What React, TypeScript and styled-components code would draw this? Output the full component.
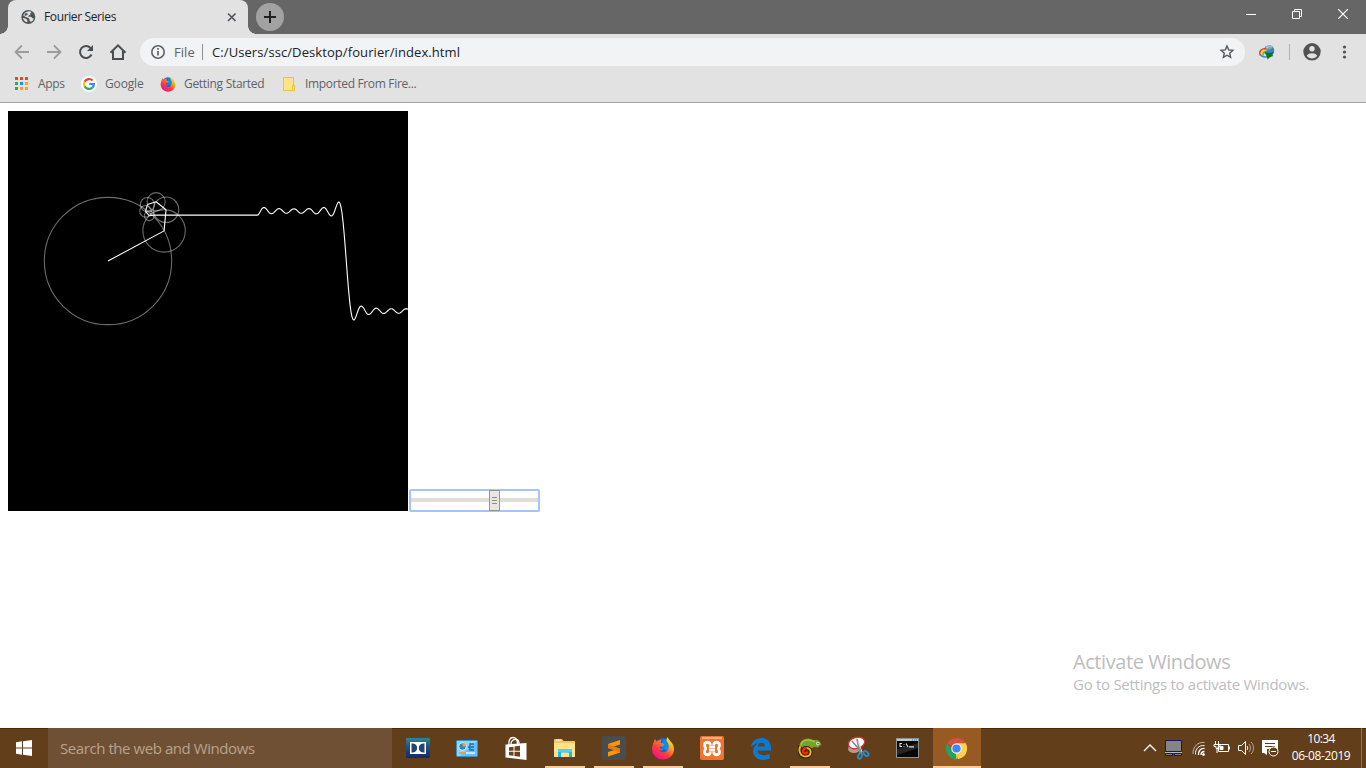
import React from 'react';
import styled, { createGlobalStyle } from 'styled-components';

const GlobalStyle = createGlobalStyle`
  * { box-sizing: border-box; }
  html, body { margin: 0; padding: 0; overflow: hidden; background: #fff; }
  body { font-family: "Open Sans", "Noto Sans", sans-serif; font-size: 12px; }
  svg { display: block; flex: none; }
`;

const Screen = styled.div`
  width: 1366px;
  height: 768px;
  display: flex;
  flex-direction: column;
`;

const Label = styled.span<{ $size?: number; $track?: number; $color?: string }>`
  font-size: ${p => p.$size ?? 12}px;
  letter-spacing: ${p => p.$track ?? 0}px;
  color: ${p => p.$color ?? '#5f6368'};
  line-height: 1;
  white-space: nowrap;
`;

/* Browser chrome */
const TabStrip = styled.header`
  height: 34px;
  display: flex;
  background: #666;
  flex: none;
`;

const Tab = styled.div`
  position: relative;
  width: 240px;
  height: 34px;
  margin-left: 8px;
  padding: 0 10px 0 13px;
  display: flex;
  align-items: center;
  background: #e2e2e2;
  border-radius: 8px 8px 0 0;
  &::before, &::after {
    content: '';
    position: absolute;
    bottom: 0;
    width: 8px;
    height: 8px;
  }
  &::before { left: -8px; background: radial-gradient(circle at 0 0, transparent 7.5px, #e2e2e2 8px); }
  &::after { right: -8px; background: radial-gradient(circle at 100% 0, transparent 7.5px, #e2e2e2 8px); }
`;

const TabTitle = styled.div`
  flex: 1;
  padding-left: 7px;
  display: flex;
`;

const NewTab = styled.button`
  width: 28px;
  height: 28px;
  margin: 3px 0 0 8px;
  padding: 0;
  border: 0;
  border-radius: 50%;
  background: #a2a2a2;
  display: grid;
  place-items: center;
`;

const WindowButtons = styled.div`
  margin-left: auto;
  display: flex;
`;

const WindowButton = styled.div`
  width: 46px;
  height: 28px;
  display: grid;
  place-items: center;
`;

const Toolbar = styled.div`
  height: 36px;
  padding-left: 12px;
  display: flex;
  align-items: center;
  background: #e2e2e2;
  flex: none;
`;

const NavButton = styled.div`
  width: 32px;
`;

const Omnibox = styled.div`
  width: 1105px;
  height: 28px;
  padding: 0 9px;
  display: flex;
  align-items: center;
  border-radius: 14px;
  background: #f1f3f4;
`;

const Scheme = styled.div`
  box-sizing: content-box;
  width: 28px;
  height: 16px;
  margin: 0 9px 0 7px;
  display: flex;
  align-items: center;
  border-right: 1px solid #8f9194;
`;

const Push = styled.div`
  margin-left: auto;
`;

const Actions = styled.div`
  flex: 1;
  display: flex;
  align-items: center;
  padding-left: 13px;
`;

const ActionDivider = styled.div`
  width: 1px;
  height: 16px;
  margin: 0 13px;
  background: #b0b0b0;
`;

const Bookmarks = styled.nav`
  height: 33px;
  padding: 0 0 4px 13px;
  display: flex;
  align-items: center;
  background: #e2e2e2;
  border-bottom: 1px solid #a0a0a0;
  flex: none;
`;

const Bookmark = styled.div<{ $width: number }>`
  width: ${p => p.$width}px;
  display: flex;
  align-items: center;
  gap: 8px;
`;

/* Page */
const Page = styled.main`
  height: 625px;
  flex: none;
  padding: 8px;
  display: flex;
  flex-direction: column;
  justify-content: space-between;
`;

const Sketch = styled.div`
  display: flex;
  align-items: flex-end;
  gap: 1px;
`;

const Slider = styled.div`
  width: 131px;
  height: 23px;
  margin-bottom: -1px;
  border: 2px solid #a3c4fc;
  border-radius: 2px;
  display: flex;
  align-items: center;
  background: linear-gradient(#e2ddd8, #e2ddd8) 0 7px / 100% 4px no-repeat;
`;

const Thumb = styled.div`
  width: 11px;
  height: 21px;
  margin: 0 0 0 78px;
  border: 1px solid #969490;
  background: #e9e6e2;
  display: flex;
  flex-direction: column;
  align-items: center;
  justify-content: center;
  gap: 2px;
`;

const Grip = styled.i`
  width: 5px;
  height: 1px;
  background: #8f8d89;
`;

const Watermark = styled.div`
  width: 285px;
  height: 68px;
  align-self: flex-end;
  display: flex;
  flex-direction: column;
  gap: 5px;
`;

/* Taskbar */
const Taskbar = styled.footer`
  height: 40px;
  flex: none;
  display: flex;
  background: #623e1a;
  box-shadow: inset 0 1px #4b2807;
`;

const Start = styled.div`
  width: 48px;
  display: grid;
  place-items: center;
`;

const SearchBox = styled.div`
  width: 344px;
  padding: 0 0 0 12px;
  margin-right: 2px;
  display: flex;
  align-items: center;
  background: #705035;
`;

const Apps = styled.div`
  display: flex;
  gap: 1px;
`;

const AppButton = styled.div<{ $open?: boolean; $active?: boolean; $nudge?: boolean }>`
  width: 48px;
  height: 40px;
  padding-right: ${p => (p.$nudge ? 1 : 0)}px;
  display: grid;
  place-items: center;
  background:
    ${p => p.$open || p.$active
      ? `linear-gradient(#fccb9c, #fccb9c) center bottom / ${p.$active ? 48 : 40}px 2px no-repeat`
      : 'none'},
    ${p => (p.$active ? '#975a22' : 'transparent')};
`;

const Tray = styled.div`
  margin-left: auto;
  display: flex;
  align-items: center;
`;

const Clock = styled.div`
  width: 80px;
  height: 38px;
  display: flex;
  flex-direction: column;
  align-items: center;
  justify-content: center;
  gap: 5px;
  padding-bottom: 2px;
`;

const ShowDesktop = styled.div`
  width: 5px;
  height: 40px;
  border-left: 1px solid #8d745b;
`;

const WAVE_LEFT = 250;
const CENTER = { x: 100, y: 150 };
const PHASE = -0.493;
const STEP = 0.03;
const TERMS = [1, 3, 5, 7, 9, 11, 13];

function FourierCanvas() {
  let { x, y } = CENTER;
  const arms = TERMS.map(n => {
    const r = 200 / (n * Math.PI);
    const from = { x, y };
    x += r * Math.cos(n * PHASE);
    y += r * Math.sin(n * PHASE);
    return { r, from, to: { x, y } };
  });
  const height = (t: number) =>
    CENTER.y + TERMS.reduce((sum, n) => sum + (200 / (n * Math.PI)) * Math.sin(n * t), 0);
  const wave = Array.from({ length: 152 }, (_, i) =>
    `${WAVE_LEFT + i},${height(PHASE - i * STEP).toFixed(2)}`).join(' ');
  return (
    <svg width="400" height="400" viewBox="0 0 400 400" fill="none" stroke="#fff" strokeWidth="1.1">
      <rect width="400" height="400" fill="#000" stroke="none" />
      {arms.map((a, i) => (
        <g key={i}>
          <circle cx={a.from.x} cy={a.from.y} r={a.r} strokeOpacity=".42" />
          <line x1={a.from.x} y1={a.from.y} x2={a.to.x} y2={a.to.y} />
        </g>
      ))}
      <line x1={x} y1={y} x2={WAVE_LEFT} y2={y} />
      <polyline points={wave} />
    </svg>
  );
}

const Globe = () => (
  <svg width="16" height="16" viewBox="0 0 16 16">
    <circle cx="7.3" cy="8" r="7" fill="#505356" />
    <path d="M7 2.600c1.300-.5 2.500-.2 3.500.4L9.300 4.300l.2 1.300-1.800.8-.4 1.400H10l1.500 1.500 1.300.1c-.4 1.300-1.300 2.600-2.600 3.300l-1.700-.8.2-1.500-1.500-1.700-2.400-.6-2.500-1.500C2.500 5 4.500 3 7 2.600z" fill="#e2e2e2" />
    <path d="M4 4.500l2.200-.5.6 1.600-2 1.200-1.500-.3z" fill="#505356" />
    <path d="M1.900 8.700l3 1 1.400 1.400v2.200C4 12.800 2.200 11 1.900 8.700z" fill="#e2e2e2" />
  </svg>
);

const Firefox = ({ size, id }: { size: number; id: string }) => (
  <svg width={size} height={size} viewBox="0 0 24 24">
    <defs>
      <linearGradient id={id} x1=".85" y1="0" x2=".2" y2=".9">
        <stop offset="0" stopColor="#fff33f" />
        <stop offset=".35" stopColor="#ffa51b" />
        <stop offset=".65" stopColor="#ff4236" />
        <stop offset="1" stopColor="#f2108c" />
      </linearGradient>
    </defs>
    <circle cx="12" cy="10.800" r="8.900" fill="#1265ce" />
    <path d="M12 3c5 0 8 3 8 7l-4 5-6-4z" fill="#0090f5" />
    <path d="M16.500 1c1 3 6 5.500 6.500 11.500.4 6.500-4.600 11-11 11S.7 18.500 1 12.500C1.100 8.500 3 5.500 4 3l1.500 2.800C7 4.900 8.500 4 10.300 3.500L9.500 6.700l4 1.500-1.400 1.700-2.800.7-.5 1.600 3.700.8c-1.500 1.900-2.800 1.500-4.500 1.200 1.700 2.500 5.500 2.800 7.800.7 3.200-3 1.800-7 .4-9.200C15 4.300 15.700 2.700 16.500 1z" fill={`url(#${id})`} />
    <path d="M4 3C3 6 3.500 9 5 10l5.200.2 3.300-2-3.600-1.300.4-3.400C8.500 4 7 4.900 5.500 5.800z" fill="#f25a45" opacity=".55" />
  </svg>
);

const Google = () => (
  <svg width="16" height="16" viewBox="0 0 16 16" fill="none" strokeWidth="2.200">
    <circle cx="8" cy="8" r="8" fill="#fff" />
    <path d="M11.600 4.500A5 5 0 0 0 3.600 5.700" stroke="#ea4335" />
    <path d="M3.600 5.700a5 5 0 0 0 0 4.600" stroke="#fbbc05" />
    <path d="M3.600 10.300a5 5 0 0 0 7.700 1.400" stroke="#34a853" />
    <path d="M8.200 8h4.700c0 1.700-.6 2.800-1.600 3.700" stroke="#4285f4" />
  </svg>
);

const AppsGrid = () => (
  <svg width="17" height="16" viewBox="0 0 17 16">
    {['#ea4335', '#ea4335', '#ea4335', '#34a853', '#2f86eb', '#f5a80a', '#34a853', '#f5a80a', '#f5a80a'].map((c, i) => (
      <rect key={i} x={2 + (i % 3) * 5} y={1 + Math.floor(i / 3) * 5} width="3" height="3" fill={c} />
    ))}
  </svg>
);

const Dolby = () => (
  <svg width="24" height="20" viewBox="0 0 24 20">
    <defs><linearGradient id="dolby" x2="0" y2="1"><stop stopColor="#2b8a98" /><stop offset=".4" stopColor="#225582" /><stop offset="1" stopColor="#1b2762" /></linearGradient></defs>
    <rect width="24" height="20" rx="1" fill="url(#dolby)" />
    <rect x="4" y="4" width="16" height="12" fill="#fff" />
    <path d="M5.500 5.500H7c5.500 0 5.500 9 0 9H5.500zM18.500 5.500H17c-5.500 0-5.500 9 0 9h1.500z" fill="#234475" />
  </svg>
);

const ControlPanel = () => (
  <svg width="22" height="17" viewBox="0 0 22 17">
    <rect x=".5" y=".5" width="21" height="16" rx="1" fill="#64c0f4" stroke="#3e91c7" />
    <path d="M1 1h20L4 16H1z" fill="#8bd5ff" />
    <circle cx="6.500" cy="6.500" r="3.800" fill="#2087d1" stroke="#eaf8ff" />
    <path d="M6.500 6.500V2.700a3.800 3.800 0 0 1 3.800 3.800z" fill="#f99d29" />
    <path d="M12 7h2V4h4M14 7v3h4M15 7h3" fill="none" stroke="#176fac" strokeWidth="1.400" />
    <path d="M3 13h6" stroke="#f3942a" strokeWidth="1.500" /><path d="M10 13h9" stroke="#e2f5ff" strokeWidth="1.500" />
  </svg>
);

const Store = () => (
  <svg width="22" height="25" viewBox="0 0 22 25">
    <path d="M.5 8.500L21.500 7v17L.5 21.500z" fill="#fff" />
    <path d="M4 9C3.500 4 5 1.500 8 1.500c3 0 4.300 1.800 4.500 6.500M6 8c0-3.500 3-5 5.500-4.500 2 .3 2.500 1.500 2.500 4.500" fill="none" stroke="#fff" strokeWidth="1.300" />
    <path d="M4 11.300l4.500-.6v4H4zM9.500 10.500l5.500-.7v4.900H9.500zM4 15.700h4.500v4L4 19.200zM9.500 15.700H15v5l-5.500-.8z" fill="#69431d" />
  </svg>
);

const Explorer = () => (
  <svg width="23" height="20" viewBox="0 0 23 20">
    <path d="M1 1.500Q1 1 2 1h7l1.500 2H22v15H1z" fill="#f6c84f" />
    <path d="M1 5h21v14H1z" fill="#ffe38d" />
    <path d="M3 2.200h5" stroke="#fff" />
    <path d="M5 11h14v8h-3v-4q0-.5-.5-.5h-7q-.5 0-.5.5v4H5z" fill="#18b8f5" />
    <path d="M5 11h14v3H5z" fill="#4fcef8" />
  </svg>
);

const Sublime = () => (
  <svg width="24" height="24" viewBox="0 0 24 24">
    <rect width="24" height="24" rx="2" fill="#4b4c4e" />
    <path d="M6 8l12-4v4.500l-7 2.300 7 2v3.800L6 20.500V16l6.500-2L6 12z" fill="#ff9800" />
    <path d="M6 8l12 4.800v3.800L6 12z" fill="#e77d08" />
  </svg>
);

const Xampp = () => (
  <svg width="24" height="24" viewBox="0 0 24 24">
    <rect width="24" height="24" rx="2" fill="#ef7430" /><path d="M2 1h20v2H2z" fill="#f8ae83" />
    <path d="M10.300 9.500C10.300 4.500 4.500 6 4.500 9c0 2 1.200 2.500 1.200 3.500S4.500 14 4.500 16c0 3 5.800 4.500 5.800-.5M13.700 9.500c0-5 5.800-3.500 5.800-.5 0 2-1.200 2.500-1.200 3.500s1.200 1.500 1.200 3.500c0 3-5.800 4.500-5.800-.5" fill="none" stroke="#fff" strokeWidth="2.800" />
    <path d="M9 11h6M9 14h6" stroke="#fff" strokeWidth="2.600" />
  </svg>
);

const Edge = () => (
  <svg width="22" height="23" viewBox="0 0 22 23">
    <path d="M1 10C1.800 4.500 5.500 1 11.300 1 18 1 21 5.800 21 11v2.500H7.600c.3 3.300 3 4.700 6.500 4.700 2.300 0 4.200-.6 5.700-1.400v4.500C18.200 22.200 15.800 23 13 23 6.800 23 3.100 19 3.100 14.300c0-3.600 1.900-6.600 5-8.100C5 6.600 2.600 8.300 1 10zm6.900-.4h6.900c0-2.500-1-3.900-3.300-3.900-2.100 0-3.400 1.700-3.600 3.900z" fill="#087bd8" />
  </svg>
);

const Chameleon = () => (
  <svg width="24" height="22" viewBox="0 0 24 22">
    <path d="M1 11C1 5 5 1 11 1.500c3 .5 4 2 6.500 1.500 3-1 4.500 2 6 4.500L20 10.500l-4-.5-2.500 1.500v4.500H11v-5l-5 1z" fill="#76a22b" />
    <path d="M3 8.500c.5-3.500 3-5.500 7-5.500 3 0 4.500 1.500 7 1.500" fill="none" stroke="#a0c637" strokeWidth="1.500" />
    <path d="M2.500 9c-2.200 4-.8 10.500 5 10.500 6.500 0 6.800-8.500 1-8.500-4 0-4.500 5.500-1 5.500 1.500 0 2-1 1.500-2" fill="none" stroke="#271a0b" strokeWidth="4" />
    <path d="M2.500 9c-2.200 4-.8 10.500 5 10.500 6.500 0 6.800-8.500 1-8.500" fill="none" stroke="#f1b51a" strokeWidth="2" />
    <path d="M8.500 11c-4 0-4.500 5.500-1 5.500 1.500 0 2-1 1.500-2" fill="none" stroke="#f32a16" strokeWidth="2.500" />
    <circle cx="19.800" cy="6.600" r="1.800" fill="#dce2df" /><circle cx="20" cy="6.600" r=".8" fill="#455" />
  </svg>
);

const Snip = () => (
  <svg width="24" height="24" viewBox="0 0 24 24">
    <ellipse cx="7" cy="13" rx="6" ry="4" fill="#b69a8c" />
    <ellipse cx="9.500" cy="7" rx="8.300" ry="5.500" transform="rotate(-15 9.500 7)" fill="#fff" stroke="#d43535" strokeWidth="1.300" />
    <path d="M5 5l10 12M10 3l3 14" stroke="#858c94" strokeWidth="1.800" />
    <path d="M11 5l4 11" stroke="#d9e0e5" />
    <g fill="none" stroke="#268fce" strokeWidth="1.800"><ellipse cx="13" cy="20" rx="1.800" ry="2.800" transform="rotate(20 13 20)" /><ellipse cx="19" cy="17.500" rx="1.800" ry="3" transform="rotate(-45 19 17.500)" /></g>
  </svg>
);

const CommandPrompt = () => (
  <svg width="23" height="20" viewBox="0 0 23 20">
    <rect x=".5" y=".5" width="22" height="19" fill="#080808" stroke="#8e9292" />
    <path d="M1 1h21v2H1z" fill="#b9cbd3" /><path d="M1 11L22 5v5L1 17z" fill="#262626" />
    <path d="M6 5.500H4v3h2M8 6v.8M8 8v.8M10 5.500l2 3.500M13 8.900h5" fill="none" stroke="#ddd" strokeWidth="1.100" />
    <path d="M16 2h1M18 2h1M20 2h1" stroke="#2374c1" />
  </svg>
);

const Chrome = () => (
  <svg width="23" height="23" viewBox="0 0 24 24">
    <path d="M12 12L2.400 6.400A11.200 11.200 0 0 1 21.700 6.500H12z" fill="#dc4e41" />
    <path d="M12 6.500h9.700A11.200 11.200 0 0 1 12 23.200L17 14z" fill="#ffd14d" />
    <path d="M2.400 6.400L7.400 15l4.600 2.500 1.500 5.600A11.200 11.200 0 0 1 2.400 6.400z" fill="#23a261" />
    <path d="M16.800 14.800L12 23.200l-.5-6z" fill="#ffd14d" />
    <circle cx="12" cy="12" r="5.500" fill="#f4f4f4" /><circle cx="12" cy="12" r="4.300" fill="#4285f4" />
  </svg>
);

const Idm = () => (
  <svg width="18" height="18" viewBox="0 0 18 18" fill="none">
    <circle cx="11" cy="7.500" r="5.300" fill="#3d7cdc" />
    <path d="M7.500 4.500C9 2 13 2 15 4l-3 2-2-1-1 2z" fill="#9cc6e8" />
    <path d="M11 3l3 1-1 2-2.500 1z" fill="#86bf5a" />
    <path d="M8.500 6C3.500 4.500.5 8.500 2.500 12.500" stroke="#e73c24" strokeWidth="1.500" />
    <path d="M8.500 7.300C4.500 6.500 2.500 9 4 12.500" stroke="#ffd72d" strokeWidth="1.500" />
    <path d="M8.500 8.700c-3-.5-4.300 1.500-3 4" stroke="#62bd3b" strokeWidth="1.500" />
    <path d="M2.500 12c2 2.300 4.500 2.300 6.500 1.800" stroke="#408bce" strokeWidth="1.500" />
    <path d="M7 8.500l3.500 1.500 5.500-1-1.500 2.300.5 1.700-3.500 1.500-1.800 2L8.500 13z" fill="#087819" />
  </svg>
);

const trayIcon = { height: 18, fill: 'none', stroke: '#fff' } as const;

export default function App() {
  return (
    <Screen>
      <GlobalStyle />
      <TabStrip>
        <Tab>
          <Globe />
          <TabTitle><Label $color="#202124" $track={-0.37}>Fourier Series</Label></TabTitle>
          <svg width="12" height="12" viewBox="0 0 12 12" stroke="#505356" strokeWidth="1.600"><path d="M2 2.500l7.500 7.500M9.500 2.500l-7.500 7.500" /></svg>
        </Tab>
        <NewTab><svg width="14" height="14" viewBox="0 0 14 14" stroke="#202124" strokeWidth="2"><path d="M1 7h12M7 1v12" /></svg></NewTab>
        <WindowButtons>
          <WindowButton><svg width="10" height="10" stroke="#fff"><path d="M0 5.500h10" /></svg></WindowButton>
          <WindowButton><svg width="10" height="10" stroke="#fff" fill="none"><path d="M.5 2.500h7v7h-7zM2.500 2V.5h7v7H8" /></svg></WindowButton>
          <WindowButton><svg width="10" height="10" stroke="#fff" strokeWidth="1.200"><path d="M0 0l10 10M10 0L0 10" /></svg></WindowButton>
        </WindowButtons>
      </TabStrip>

      <Toolbar>
        <NavButton><svg width="20" height="20" viewBox="0 0 20 20" fill="none" stroke="#9b9b9b" strokeWidth="1.800"><path d="M17 10H4M10 3.500L3.500 10l6.500 6.500" /></svg></NavButton>
        <NavButton><svg width="20" height="20" viewBox="0 0 20 20" fill="none" stroke="#9b9b9b" strokeWidth="1.800"><path d="M3 10h13M10 3.500l6.500 6.500-6.500 6.500" /></svg></NavButton>
        <NavButton><svg width="20" height="20" viewBox="0 0 20 20" fill="none" stroke="#4b4d50" strokeWidth="2"><path d="M15.500 12.500A6 6 0 1 1 14.500 6" /><path d="M17 3v6h-6z" fill="#4b4d50" stroke="none" /></svg></NavButton>
        <NavButton><svg width="20" height="20" viewBox="0 0 20 20" fill="none" stroke="#4b4d50" strokeWidth="2"><path d="M2.500 10.700L10 3.400l7.500 7.300M5 9v8h10V9" /></svg></NavButton>
        <Omnibox>
          <svg width="18" height="18" viewBox="0 0 18 18" fill="none" stroke="#5f6368"><circle cx="9" cy="9" r="6.200" strokeWidth="1.600" /><path d="M9 8v4.500M9 5v1.700" strokeWidth="1.700" /></svg>
          <Scheme><Label $size={13} $track={0.05}>File</Label></Scheme>
          <Label $size={13} $track={0.085} $color="#202124">C:/Users/ssc/Desktop/fourier/index.html</Label>
          <Push><svg width="18" height="18" viewBox="0 0 18 18" fill="none" stroke="#55585d" strokeWidth="1.400"><path d="M9 3l1.700 3.900 4.200.4-3.200 2.900.9 4.200L9 12.200l-3.600 2.200.9-4.200-3.200-2.900 4.200-.4z" /></svg></Push>
        </Omnibox>
        <Actions>
          <Idm />
          <ActionDivider />
          <svg width="20" height="20" viewBox="0 0 20 20"><circle cx="9" cy="9.800" r="8.700" fill="#505356" /><circle cx="9" cy="6.800" r="2.700" fill="#e2e2e2" /><path d="M3.800 13.800c1.700-3.300 8.700-3.300 10.400 0-2.500 3.500-7.900 3.500-10.400 0z" fill="#e2e2e2" /></svg>
          <svg width="42" height="18" viewBox="0 0 42 18" fill="#505356"><circle cx="21.500" cy="4" r="1.600" /><circle cx="21.500" cy="9" r="1.600" /><circle cx="21.500" cy="14" r="1.600" /></svg>
        </Actions>
      </Toolbar>

      <Bookmarks>
        <Bookmark $width={68}><AppsGrid /><Label $track={-0.3}>Apps</Label></Bookmark>
        <Bookmark $width={79}><Google /><Label $track={-0.15}>Google</Label></Bookmark>
        <Bookmark $width={121}><Firefox size={16} id="fxBookmark" /><Label $track={-0.3}>Getting Started</Label></Bookmark>
        <Bookmark $width={150}>
          <svg width="16" height="16" viewBox="0 0 16 16" fill="#fee486" stroke="#e9c345"><path d="M2.500 1.500h10v8h1v5h-11zM11.500 13.500v-4h2v5h-2z" /></svg>
          <Label $track={-0.33}>Imported From Fire...</Label>
        </Bookmark>
      </Bookmarks>

      <Page>
        <Sketch>
          <FourierCanvas />
          <Slider><Thumb><Grip /><Grip /><Grip /></Thumb></Slider>
        </Sketch>
        <Watermark>
          <Label $size={20} $track={-0.43} $color="#bdbdbd">Activate Windows</Label>
          <Label $size={15} $track={-0.28} $color="#bdbdbd">Go to Settings to activate Windows.</Label>
        </Watermark>
      </Page>

      <Taskbar>
        <Start><svg width="16" height="16" viewBox="0 0 16 16" fill="#fff"><path d="M0 2.200L6 1.300v6.200H0zM7 1.200L16 0v7.500H7zM0 8.500h6v6.200l-6-.9zM7 8.500h9V16l-9-1.200z" /></svg></Start>
        <SearchBox><Label $size={15} $track={-0.43} $color="#b9a28c">Search the web and Windows</Label></SearchBox>
        <Apps>
          <AppButton><Dolby /></AppButton>
          <AppButton><ControlPanel /></AppButton>
          <AppButton><Store /></AppButton>
          <AppButton $open $nudge><Explorer /></AppButton>
          <AppButton $open><Sublime /></AppButton>
          <AppButton $open><Firefox size={24} id="fxTaskbar" /></AppButton>
          <AppButton><Xampp /></AppButton>
          <AppButton><Edge /></AppButton>
          <AppButton $open><Chameleon /></AppButton>
          <AppButton><Snip /></AppButton>
          <AppButton $nudge><CommandPrompt /></AppButton>
          <AppButton $active $nudge><Chrome /></AppButton>
        </Apps>
        <Tray>
          <svg width="22" {...trayIcon} strokeWidth="1.300"><path d="M3 12l6-6 6 6" /></svg>
          <svg width="28" height="18" fill="#858585"><path d="M2.500 1.500h16v11h-16z" stroke="#15156f" /><path d="M2 13.500h17" stroke="#bbb" /><path d="M2.500 14.500h7v2h-7zM11.500 14.500h7v2h-7z" stroke="#15156f" /></svg>
          <svg width="22" {...trayIcon}><path d="M2 15C1.500 8 7 2.500 13.500 3.500" opacity=".6" /><path d="M4.500 15.500C4 10 8 6 13.500 6.500" /><path d="M7.500 16C7 12 10 9 13.500 9.500M10 16c0-2.500 1.500-3.500 3.500-3.500" strokeWidth="1.300" /><circle cx="12.500" cy="15.500" r="1" fill="#fff" /></svg>
          <svg width="24" {...trayIcon}><path d="M5.500 5.500h10v7h-10zM16.500 7.500v3M2.500 2v3M5.500 2v3M1 5.500h6v2H5v2H3v-2H1zM4 9v5" /><path d="M7 7.500h3v3H7z" fill="#fff" /></svg>
          <svg width="25" {...trayIcon}><path d="M1.500 6.500h3l4-4v13l-4-4h-3z" /><path d="M10 7c1 1.500 1 2.500 0 4" /><path d="M12 5c2 2.500 2 5.500 0 8M14 3c3.300 3 3.300 9 0 12" opacity=".5" /></svg>
          <svg width="19" {...trayIcon}><path d="M0 1h16v9H0z" fill="#fff" stroke="none" /><path d="M0 10h5v6l-3-2H0z" fill="#fff" stroke="none" /><path d="M3 4.500h10M3 7.500h10" stroke="#623e1a" /><circle cx="11.500" cy="12.500" r="4.500" fill="#623e1a" /><path d="M9 12.500h5" /></svg>
          <Clock>
            <Label $size={12} $track={-0.6} $color="#fff">10:34</Label>
            <Label $size={12} $track={-0.4} $color="#fff">06-08-2019</Label>
          </Clock>
          <ShowDesktop />
        </Tray>
      </Taskbar>
    </Screen>
  );
}
